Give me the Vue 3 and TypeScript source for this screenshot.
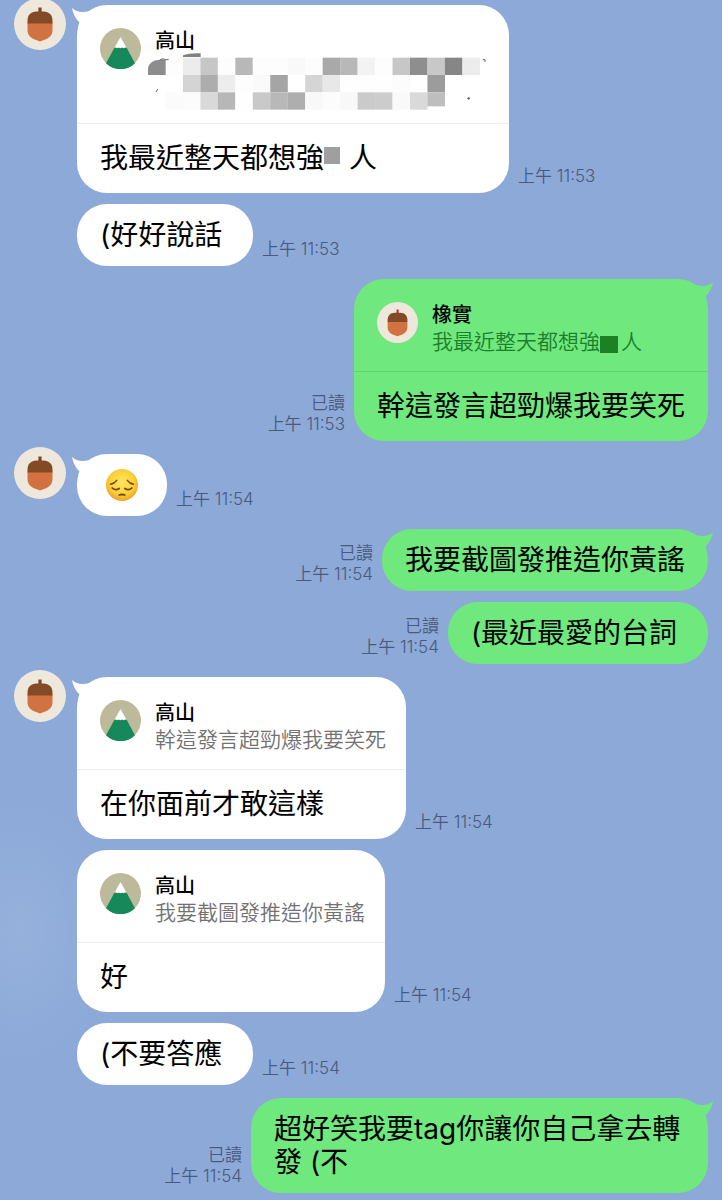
<script setup lang="ts">
type Quote = { who: 'mountain' | 'acorn'; name: string; text?: string; masked?: 'row' | 'word'; tail?: string }
type Message = {
  id: number
  mine: boolean
  first: boolean
  time: string
  text?: string
  maskedTail?: string
  emoji?: boolean
  quote?: Quote
}

const messages: Message[] = [
  { id: 1, mine: false, first: true, time: '上午 11:53', text: '我最近整天都想強', maskedTail: '人', quote: { who: 'mountain', name: '高山', masked: 'row' } },
  { id: 2, mine: false, first: false, time: '上午 11:53', text: '(好好說話 ' },
  { id: 3, mine: true, first: true, time: '上午 11:53', text: '幹這發言超勁爆我要笑死', quote: { who: 'acorn', name: '橡實', text: '我最近整天都想強', masked: 'word', tail: '人' } },
  { id: 4, mine: false, first: true, time: '上午 11:54', emoji: true },
  { id: 5, mine: true, first: true, time: '上午 11:54', text: '我要截圖發推造你黃謠' },
  { id: 6, mine: true, first: false, time: '上午 11:54', text: '(最近最愛的台詞 ' },
  { id: 7, mine: false, first: true, time: '上午 11:54', text: '在你面前才敢這樣', quote: { who: 'mountain', name: '高山', text: '幹這發言超勁爆我要笑死' } },
  { id: 8, mine: false, first: false, time: '上午 11:54', text: '好', quote: { who: 'mountain', name: '高山', text: '我要截圖發推造你黃謠' } },
  { id: 9, mine: false, first: false, time: '上午 11:54', text: '(不要答應 ' },
  { id: 10, mine: true, first: true, time: '上午 11:54', text: '超好笑我要tag你讓你自己拿去轉發 (不' },
]

// Grey level of each mosaic tile, row by row; 255 tiles are left out.
const tiles: number[][] = [
  [255, 253, 236, 198, 253, 184, 253, 253, 249, 253, 169, 184, 243, 253, 199, 142, 200, 134, 236],
  [255, 255, 212, 173, 237, 253, 250, 165, 255, 213, 232, 254, 254, 254, 252, 255, 156, 255, 255],
  [255, 251, 252, 217, 183, 254, 201, 184, 174, 248, 252, 248, 202, 204, 249, 217, 190, 255, 255],
]
const cells = tiles.flatMap((row, r) =>
  row.map((v, c) => ({ key: `${r}-${c}`, v, x: 24 + c * 52.4, y: 53 + r * 52, h: r === 2 && c === 16 ? 42 : 52 })),
).filter((cell) => cell.v < 255)
</script>

<template>
  <main class="chat">
    <ol class="messages">
      <li v-for="m in messages" :key="m.id" class="row" :class="{ mine: m.mine, first: m.first }">
        <div v-if="!m.mine" class="gutter">
          <svg v-if="m.first" class="avatar" viewBox="0 0 52 52" role="img" aria-label="橡實">
            <circle cx="26" cy="26" r="26" fill="#eee7dc" />
            <path d="M24.400 9.500h3.200V16h-3.200z" fill="#7c4526" />
            <path d="M13.500 24.500h25V32c0 5.500-4 8.500-8 9.800L26 43.500l-4.500-1.700c-4-1.300-8-4.300-8-9.800z" fill="#d17240" />
            <path d="M13.500 25.500v-3c0-5.500 3.500-9 9-9h7c5.500 0 9 3.500 9 9v3z" fill="#834a27" />
          </svg>
        </div>

        <article class="bubble">
          <svg v-if="m.first" class="tail" viewBox="0 0 20 20" aria-hidden="true">
            <path d="M0 0.700C4 5 10 6 17 4L20 12L6 19L7.500 15.500C3.500 11.500 1 7 0 0.700Z" />
          </svg>

          <header v-if="m.quote" class="quote">
            <svg v-if="m.quote.who === 'mountain'" class="quote-avatar" viewBox="0 0 41 41" aria-hidden="true">
              <circle cx="20.500" cy="20.500" r="20.500" fill="#bdb99b" />
              <path d="M14.500 19.500h12L35 35.200A20.500 20.500 0 0 1 6 35.200z" fill="#16895a" />
              <path d="M20.500 9l6.200 11-1.500-.7-1.600.9-1.500-.8-1.600.8-1.600-.8-1.600.8-1.600-.9-1.400.7z" fill="#fff" />
            </svg>
            <svg v-else class="quote-avatar" viewBox="0 0 52 52" aria-hidden="true">
              <circle cx="26" cy="26" r="26" fill="#eee7dc" />
              <path d="M24.800 9.500h2.600V16h-2.600z" fill="#b5302c" />
              <path d="M13.500 24.500h25V32c0 5.500-4 8.500-8 9.800L26 43.500l-4.500-1.700c-4-1.300-8-4.300-8-9.800z" fill="#d17240" />
              <path d="M13.500 25.500v-3c0-5.500 3.500-9 9-9h7c5.500 0 9 3.500 9 9v3z" fill="#834a27" />
            </svg>
            <div class="quote-copy">
              <strong class="name">{{ m.quote.name }}</strong>
              <svg v-if="m.quote.masked === 'row'" class="mosaic" viewBox="45 48 1002 150" aria-hidden="true">
                <rect v-for="c in cells" :key="c.key" :x="c.x" :y="c.y" width="52.600" :height="c.h" :fill="`rgb(${c.v},${c.v},${c.v})`" />
                <path d="M24 105V84Q30 60 58 59H77V105Z" fill="#8d8d8d" />
                <path d="M129 51V46Q146 39 182 40V51Z" fill="#808080" />
                <path d="M60 60l8-5M66 62l6-7M72 59h14M48 156l5-9M1028 59h7v7" fill="none" stroke="#666" stroke-width="3" />
                <circle cx="986" cy="175" r="3.500" fill="#555" />
              </svg>
              <p v-else class="quote-text">{{ m.quote.text }}<template v-if="m.quote.masked"><span class="mask-green"></span>{{ m.quote.tail }}</template></p>
            </div>
          </header>

          <p class="text">
            <svg v-if="m.emoji" class="emoji" viewBox="0 0 32 32" role="img" aria-label="😔">
              <defs>
                <radialGradient id="face" cx="50%" cy="42%" r="58%">
                  <stop offset="0" stop-color="#ffe65c" />
                  <stop offset="0.650" stop-color="#fcd03c" />
                  <stop offset="1" stop-color="#eda223" />
                </radialGradient>
              </defs>
              <circle cx="16" cy="16" r="16" fill="url(#face)" />
              <g fill="none" stroke="#6f4613" stroke-linecap="round">
                <path d="M4.500 15.200Q8.500 14.500 10.700 11.300M27.500 15.200Q23.500 14.500 21.300 11.300" stroke-width="1.400" />
                <path d="M6.200 19Q9.500 22.200 13.200 19.500M25.800 19Q22.500 22.200 18.800 19.500" stroke-width="1.700" />
                <path d="M13.200 26Q16 25 18.800 26" stroke-width="1.800" />
              </g>
            </svg>
            <template v-else>{{ m.text }}<template v-if="m.maskedTail"><span class="mask-grey"></span>{{ m.maskedTail }}</template></template>
          </p>
        </article>

        <div class="meta">
          <span v-if="m.mine">已讀</span>
          <time>{{ m.time }}</time>
        </div>
      </li>
    </ol>
  </main>
</template>

<style>
body {
  margin: 0;
  background: #8ca9d8;
}
</style>

<style scoped>
.chat {
  box-sizing: border-box;
  min-height: 100vh;
  padding: 5px 14px 7px;
  overflow: hidden;
  background:
    radial-gradient(ellipse 90px 130px at 20px 930px, rgba(255, 255, 255, 0.09), transparent),
    #8ca9d8;
  font-family: Inter, "Noto Sans CJK TC", sans-serif;
  color: #000;
}

.messages {
  display: flex;
  flex-direction: column;
  margin: 0;
  padding: 0;
  list-style: none;
}

.row {
  display: flex;
  align-items: flex-start;
  margin-top: 11px;
}

.row.first {
  margin-top: 13px;
}

.row:first-child {
  margin-top: 0;
}

.row.mine {
  flex-direction: row-reverse;
}

.gutter {
  flex: none;
  width: 52px;
  margin-right: 11px;
}

.avatar {
  display: block;
  width: 52px;
  height: 52px;
  margin: -7px 0;
}

.bubble {
  --fill: #fff;
  --line: #ededed;
  --sub: #727272;
  position: relative;
  max-width: 457px;
  border-radius: 30px;
  background: var(--fill);
}

.mine .bubble {
  --fill: #6fe87e;
  --line: #62d573;
  --sub: #1c7f2a;
}

.tail {
  position: absolute;
  top: 2px;
  left: -5px;
  width: 20px;
  height: 20px;
  fill: var(--fill);
}

.mine .tail {
  right: -5px;
  left: auto;
  transform: scaleX(-1);
}

.quote {
  display: flex;
  gap: 14px;
  padding: 22px 20px 17px 23px;
  border-bottom: 1px solid var(--line);
}

.quote-avatar {
  flex: none;
  width: 41px;
  height: 41px;
  margin-top: 1px;
}

.name {
  display: block;
  font-size: 20px;
  font-weight: 500;
  line-height: 29px;
}

.quote-text {
  margin: 0;
  font-size: 21px;
  font-weight: 350;
  line-height: 24px;
  color: var(--sub);
}

.mosaic {
  display: block;
  width: 334px;
  height: 50px;
  overflow: visible;
}

.text {
  margin: 0;
  padding: 15px 23px 14px;
  font-size: 28px;
  line-height: 33px;
  white-space: break-spaces;
}

.quote + .text {
  padding: 18px 23px;
}

.mask-grey {
  display: inline-block;
  width: 16px;
  height: 17px;
  margin-right: 9px;
  vertical-align: 4px;
  background: #9f9f9f;
}

.mask-green {
  display: inline-block;
  width: 18px;
  height: 17px;
  margin-right: 3px;
  vertical-align: -4px;
  background: #1c8124;
}

.emoji {
  display: block;
  width: 32px;
  height: 32px;
  margin: 0 6px 1px;
}

.meta {
  display: flex;
  flex: none;
  flex-direction: column;
  align-self: flex-end;
  margin: 0 9px 6px;
  font-size: 17px;
  font-weight: 350;
  line-height: 21px;
  color: #495a7d;
}

.mine .meta {
  align-items: flex-end;
}
</style>
